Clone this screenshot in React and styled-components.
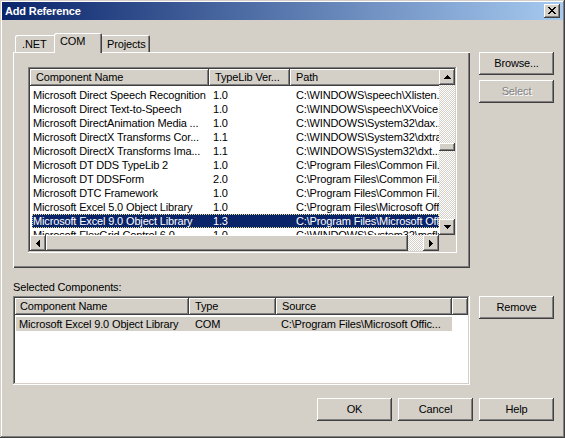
import React from 'react';
import styled, { createGlobalStyle, css } from 'styled-components';

const FACE = '#d4d0c8';
const LIGHT = '#ffffff';
const SHADOW = '#808080';
const DARK = '#404040';
const SEL = '#0a246a';

const Global = createGlobalStyle`
  html, body { margin: 0; padding: 0; background: ${FACE}; }
  body {
    font-family: "Liberation Sans", Arial, sans-serif;
    font-size: 11px;
    letter-spacing: -0.15px;
    color: #000;
  }
  * { box-sizing: border-box; }
`;

const raised = css`
  box-shadow: inset -1px -1px ${DARK}, inset 1px 1px ${LIGHT},
    inset -2px -2px ${SHADOW}, inset 2px 2px ${FACE};
`;

const sunken = css`
  box-shadow: inset -1px -1px ${LIGHT}, inset 1px 1px ${SHADOW},
    inset -2px -2px ${FACE}, inset 2px 2px ${DARK};
`;

const Window = styled.div`
  width: 565px;
  height: 438px;
  background: ${FACE};
  padding: 2px;
  display: flex;
  flex-direction: column;
  box-shadow: inset -1px -1px ${DARK}, inset 1px 1px ${FACE},
    inset -2px -2px ${SHADOW}, inset 2px 2px ${LIGHT};
`;

const TitleBar = styled.div`
  flex: none;
  height: 18px;
  display: flex;
  align-items: center;
  padding: 0 3px 0 2px;
  background: linear-gradient(to right, ${SEL}, #a6caf0);
  color: #fff;
  font-weight: bold;
  font-size: 11px;
`;

const TitleText = styled.span`
  flex: 1;
  padding-left: 1px;
`;

const CloseBtn = styled.div`
  width: 16px;
  height: 14px;
  background: ${FACE};
  ${raised};
  display: flex;
  align-items: center;
  justify-content: center;
  padding-bottom: 1px;
`;

const Body = styled.div`
  display: grid;
  grid-template-columns: 457px 75px;
  column-gap: 9px;
  padding: 13px 0 0 11px;
`;

const TabArea = styled.div`
  display: flex;
  flex-direction: column;
`;

const TabStrip = styled.div`
  height: 19px;
  display: flex;
  align-items: flex-end;
  padding-left: 2px;
`;

const Tab = styled.div`
  position: relative;
  height: ${p => (p.$active ? 20 : 17)}px;
  width: ${p => p.$w + (p.$active ? 4 : 0)}px;
  margin: ${p => (p.$active ? '0 -2px -1px -2px' : '0')};
  z-index: ${p => (p.$active ? 2 : 1)};
  background: ${FACE};
  border-radius: 2px 2px 0 0;
  box-shadow: inset 1px 1px ${LIGHT}, inset -1px 0 ${DARK}, inset -2px 0 ${SHADOW};
  padding: ${p => (p.$active ? '2px 0 0 6px' : '3px 0 0 7px')};
  line-height: 13px;
  white-space: nowrap;
`;

const TabPanel = styled.div`
  height: 216px;
  background: ${FACE};
  box-shadow: inset 1px 1px ${LIGHT}, inset -1px -1px ${DARK}, inset -2px -2px ${SHADOW};
  padding: 15px 13px 15px 15px;
`;

const ListView = styled.div`
  width: ${p => p.$w}px;
  height: ${p => p.$h}px;
  background: #fff;
  ${sunken};
  padding: 2px;
  display: grid;
  grid-template-columns: ${p => (p.$scroll ? '1fr 16px' : '1fr')};
  grid-template-rows: ${p => (p.$scroll ? '1fr 16px' : '1fr')};
`;

const ListContent = styled.div`
  overflow: hidden;
  min-width: 0;
  min-height: 0;
`;

const HeaderRow = styled.div`
  display: flex;
  height: 17px;
  white-space: nowrap;
`;

const HeaderCell = styled.div`
  flex: none;
  width: ${p => p.$w}px;
  height: 17px;
  background: ${FACE};
  ${raised};
  padding-left: ${p => p.$pad}px;
  line-height: 17px;
  overflow: hidden;
`;

const Rows = styled.div`
  padding: 2px 0 0 ${p => p.$padLeft}px;
`;

const Row = styled.div`
  display: flex;
  height: 14px;
  line-height: 14px;
  white-space: nowrap;
  background: ${p => (p.$sel ? SEL : p.$grey ? FACE : 'transparent')};
  color: ${p => (p.$sel ? '#fff' : '#000')};
  outline: ${p => (p.$sel ? `1px dotted #e6dc8c` : 'none')};
  outline-offset: -1px;
  width: ${p => (p.$w ? `${p.$w}px` : 'auto')};
`;

const Cell = styled.div`
  flex: none;
  width: ${p => p.$w}px;
  padding-left: ${p => p.$pad}px;
  overflow: hidden;
`;

const VScroll = styled.div`
  display: flex;
  flex-direction: column;
`;

const HScroll = styled.div`
  display: flex;
`;

const ArrowBtn = styled.div`
  flex: none;
  width: 16px;
  height: 16px;
  background: ${FACE};
  ${raised};
  display: flex;
  align-items: center;
  justify-content: center;
`;

const Track = styled.div`
  flex: 1;
  display: flex;
  flex-direction: ${p => (p.$vertical ? 'column' : 'row')};
  padding-top: ${p => p.$offset || 0}px;
  background-color: #fff;
  background-image: repeating-conic-gradient(${FACE} 0 25%, #fff 0 50%);
  background-size: 2px 2px;
`;

const Thumb = styled.div`
  flex: none;
  background: ${FACE};
  ${raised};
`;

const Corner = styled.div`
  background: ${FACE};
`;

const ButtonStack = styled.div`
  display: flex;
  flex-direction: column;
  gap: 5px;
  padding-top: ${p => p.$top || 0}px;
`;

const Button = styled.div`
  width: 75px;
  height: 23px;
  background: ${FACE};
  ${raised};
  display: flex;
  align-items: center;
  justify-content: center;
  padding-bottom: 1px;
  color: ${p => (p.$disabled ? SHADOW : '#000')};
  text-shadow: ${p => (p.$disabled ? `1px 1px ${LIGHT}` : 'none')};
`;

const Label = styled.div`
  grid-column: 1 / span 2;
  margin-top: 12px;
  height: 16px;
  line-height: 14px;
`;

const Footer = styled.div`
  grid-column: 1 / span 2;
  display: flex;
  justify-content: flex-end;
  gap: 6px;
  margin-top: 13px;
`;

const Px = ({ w, h, cells, color = '#000' }) => (
  <svg width={w} height={h} viewBox={`0 0 ${w} ${h}`} shapeRendering="crispEdges">
    {cells.map(([x, y, cw, ch], i) => (
      <rect key={i} x={x} y={y} width={cw} height={ch} fill={color} />
    ))}
  </svg>
);

const UpArrow = () => <Px w={7} h={4} cells={[[3, 0, 1, 1], [2, 1, 3, 1], [1, 2, 5, 1], [0, 3, 7, 1]]} />;
const DownArrow = () => <Px w={7} h={4} cells={[[0, 0, 7, 1], [1, 1, 5, 1], [2, 2, 3, 1], [3, 3, 1, 1]]} />;
const LeftArrow = () => <Px w={4} h={7} cells={[[0, 3, 1, 1], [1, 2, 1, 3], [2, 1, 1, 5], [3, 0, 1, 7]]} />;
const RightArrow = () => <Px w={4} h={7} cells={[[3, 3, 1, 1], [2, 2, 1, 3], [1, 1, 1, 5], [0, 0, 1, 7]]} />;
const CloseX = () => (
  <Px
    w={8}
    h={7}
    cells={[
      [0, 0, 2, 1], [6, 0, 2, 1],
      [1, 1, 2, 1], [5, 1, 2, 1],
      [2, 2, 4, 1],
      [3, 3, 2, 1],
      [2, 4, 4, 1],
      [1, 5, 2, 1], [5, 5, 2, 1],
      [0, 6, 2, 1], [6, 6, 2, 1],
    ]}
  />
);

const components = [
  ['Microsoft Direct Speech Recognition', '1.0', 'C:\\WINDOWS\\speech\\Xlisten.dll'],
  ['Microsoft Direct Text-to-Speech', '1.0', 'C:\\WINDOWS\\speech\\XVoice.dll'],
  ['Microsoft DirectAnimation Media ...', '1.0', 'C:\\WINDOWS\\System32\\dax...'],
  ['Microsoft DirectX Transforms Cor...', '1.1', 'C:\\WINDOWS\\System32\\dxtrans.dll'],
  ['Microsoft DirectX Transforms Ima...', '1.1', 'C:\\WINDOWS\\System32\\dxt...'],
  ['Microsoft DT DDS TypeLib 2', '1.0', 'C:\\Program Files\\Common Fil..'],
  ['Microsoft DT DDSForm', '2.0', 'C:\\Program Files\\Common Fil..'],
  ['Microsoft DTC Framework', '1.0', 'C:\\Program Files\\Common Fil..'],
  ['Microsoft Excel 5.0 Object Library', '1.0', 'C:\\Program Files\\Microsoft Office\\...'],
  ['Microsoft Excel 9.0 Object Library', '1.3', 'C:\\Program Files\\Microsoft Office\\...'],
  ['Microsoft FlexGrid Control 6.0', '1.0', 'C:\\WINDOWS\\System32\\msflxgrd.ocx'],
];

const SELECTED_INDEX = 9;

export default function App() {
  return (
    <>
      <Global />
      <Window>
        <TitleBar>
          <TitleText>Add Reference</TitleText>
          <CloseBtn>
            <CloseX />
          </CloseBtn>
        </TitleBar>
        <Body>
          <TabArea>
            <TabStrip>
              <Tab $w={41}>.NET</Tab>
              <Tab $w={44} $active>COM</Tab>
              <Tab $w={50}>Projects</Tab>
            </TabStrip>
            <TabPanel>
              <ListView $w={429} $h={186} $scroll>
                <ListContent>
                  <HeaderRow>
                    <HeaderCell $w={179} $pad={6}>Component Name</HeaderCell>
                    <HeaderCell $w={81} $pad={6}>TypeLib Ver...</HeaderCell>
                    <HeaderCell $w={220} $pad={6}>Path</HeaderCell>
                  </HeaderRow>
                  <Rows $padLeft={2}>
                    {components.map(([name, ver, path], i) => (
                      <Row key={name} $sel={i === SELECTED_INDEX} $w={407}>
                        <Cell $w={177} $pad={1}>{name}</Cell>
                        <Cell $w={81} $pad={4}>{ver}</Cell>
                        <Cell $w={149} $pad={6}>{path}</Cell>
                      </Row>
                    ))}
                  </Rows>
                </ListContent>
                <VScroll>
                  <ArrowBtn><UpArrow /></ArrowBtn>
                  <Track $vertical $offset={58}>
                    <Thumb style={{ height: 8 }} />
                  </Track>
                  <ArrowBtn><DownArrow /></ArrowBtn>
                </VScroll>
                <HScroll>
                  <ArrowBtn><LeftArrow /></ArrowBtn>
                  <Track>
                    <Thumb style={{ width: 362 }} />
                  </Track>
                  <ArrowBtn><RightArrow /></ArrowBtn>
                </HScroll>
                <Corner />
              </ListView>
            </TabPanel>
          </TabArea>
          <ButtonStack $top={19}>
            <Button>Browse...</Button>
            <Button $disabled>Select</Button>
          </ButtonStack>

          <Label>Selected Components:</Label>

          <ListView $w={457} $h={89}>
            <ListContent>
              <HeaderRow>
                <HeaderCell $w={174} $pad={5}>Component Name</HeaderCell>
                <HeaderCell $w={87} $pad={6}>Type</HeaderCell>
                <HeaderCell $w={176} $pad={6}>Source</HeaderCell>
                <HeaderCell $w={16} $pad={0} />
              </HeaderRow>
              <Rows $padLeft={1}>
                <Row $grey $w={436}>
                  <Cell $w={173} $pad={3}>Microsoft Excel 9.0 Object Library</Cell>
                  <Cell $w={87} $pad={6}>COM</Cell>
                  <Cell $w={176} $pad={5}>C:\Program Files\Microsoft Offic...</Cell>
                </Row>
              </Rows>
            </ListContent>
          </ListView>
          <ButtonStack>
            <Button>Remove</Button>
          </ButtonStack>

          <Footer>
            <Button>OK</Button>
            <Button>Cancel</Button>
            <Button>Help</Button>
          </Footer>
        </Body>
      </Window>
    </>
  );
}
